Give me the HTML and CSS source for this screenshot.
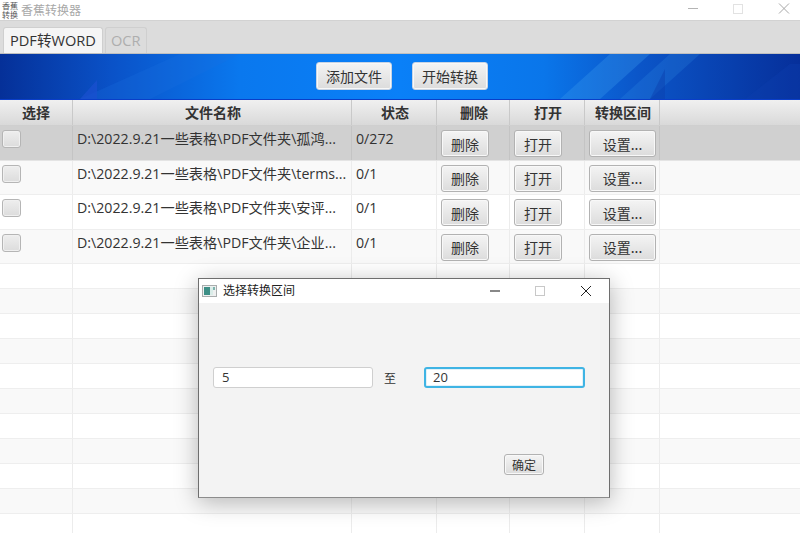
FILE: index.html
```html
<!DOCTYPE html>
<html lang="zh">
<head>
<meta charset="utf-8">
<title>香蕉转换器</title>
<link rel="stylesheet" href="styles.css">
</head>
<body>
<div class="app">
  <div class="titlebar">
    <div class="logo"><span>香蕉</span><span>转换</span></div>
    <div class="apptitle">香蕉转换器</div>
    <div class="winbtns">
      <svg class="wb" width="46" height="20" viewBox="0 0 46 20"><path d="M26 8.5h10" stroke="#b4b4b4" stroke-width="1"/></svg>
      <svg class="wb" width="46" height="20" viewBox="0 0 46 20"><rect x="25.5" y="4.5" width="9" height="9" fill="none" stroke="#e2e2e2"/></svg>
      <svg class="wb" width="46" height="20" viewBox="0 0 46 20"><path d="M25 3.5l10 10M35 3.5l-10 10" stroke="#a8a8a8" stroke-width="1" fill="none"/></svg>
    </div>
  </div>
  <div class="tabbar">
    <div class="tab active">PDF转WORD</div>
    <div class="tab disabled">OCR</div>
  </div>
  <div class="banner">
    <svg class="banner-art" width="800" height="45" viewBox="0 0 800 45" preserveAspectRatio="none">
      <path d="M80 45L180 0H240L150 45Z" fill="#1a6fe0" opacity=".25"/>
      <path d="M80 45L97 26V45Z" fill="#1b50d0" opacity=".7"/>
      <path d="M560 45L610 0H650L600 45Z" fill="#3fa0f0" opacity=".3"/>
      <path d="M620 45L670 0H700L650 45Z" fill="#3fa0f0" opacity=".18"/>
      <path d="M650 45L665 15V45Z" fill="#0a3fae" opacity=".45"/>
      <path d="M745 45L790 10L800 10V45Z" fill="#0f3fb0" opacity=".35"/>
    </svg>
    <button class="btn banner-btn">添加文件</button>
    <button class="btn banner-btn">开始转换</button>
  </div>
  <div class="table">
    <div class="row head">
      <div class="c c1">选择</div><div class="c c2">文件名称</div><div class="c c3">状态</div><div class="c c4">删除</div><div class="c c5">打开</div><div class="c c6">转换区间</div><div class="c c7"></div>
    </div>
    <div class="row data sel">
      <div class="c c1"><span class="check"></span></div><div class="c c2"><span class="txt">D:\2022.9.21一些表格\PDF文件夹\孤鸿...</span></div><div class="c c3"><span class="txt">0/272</span></div><div class="c c4"><button class="btn">删除</button></div><div class="c c5"><button class="btn">打开</button></div><div class="c c6"><button class="btn wide">设置...</button></div><div class="c c7"></div>
    </div>
    <div class="row data odd">
      <div class="c c1"><span class="check"></span></div><div class="c c2"><span class="txt">D:\2022.9.21一些表格\PDF文件夹\terms...</span></div><div class="c c3"><span class="txt">0/1</span></div><div class="c c4"><button class="btn">删除</button></div><div class="c c5"><button class="btn">打开</button></div><div class="c c6"><button class="btn wide">设置...</button></div><div class="c c7"></div>
    </div>
    <div class="row data">
      <div class="c c1"><span class="check"></span></div><div class="c c2"><span class="txt">D:\2022.9.21一些表格\PDF文件夹\安评...</span></div><div class="c c3"><span class="txt">0/1</span></div><div class="c c4"><button class="btn">删除</button></div><div class="c c5"><button class="btn">打开</button></div><div class="c c6"><button class="btn wide">设置...</button></div><div class="c c7"></div>
    </div>
    <div class="row data odd">
      <div class="c c1"><span class="check"></span></div><div class="c c2"><span class="txt">D:\2022.9.21一些表格\PDF文件夹\企业...</span></div><div class="c c3"><span class="txt">0/1</span></div><div class="c c4"><button class="btn">删除</button></div><div class="c c5"><button class="btn">打开</button></div><div class="c c6"><button class="btn wide">设置...</button></div><div class="c c7"></div>
    </div>
    <div class="row blank"><div class="c c1"></div><div class="c c2"></div><div class="c c3"></div><div class="c c4"></div><div class="c c5"></div><div class="c c6"></div><div class="c c7"></div></div>
    <div class="row blank odd"><div class="c c1"></div><div class="c c2"></div><div class="c c3"></div><div class="c c4"></div><div class="c c5"></div><div class="c c6"></div><div class="c c7"></div></div>
    <div class="row blank"><div class="c c1"></div><div class="c c2"></div><div class="c c3"></div><div class="c c4"></div><div class="c c5"></div><div class="c c6"></div><div class="c c7"></div></div>
    <div class="row blank odd"><div class="c c1"></div><div class="c c2"></div><div class="c c3"></div><div class="c c4"></div><div class="c c5"></div><div class="c c6"></div><div class="c c7"></div></div>
    <div class="row blank"><div class="c c1"></div><div class="c c2"></div><div class="c c3"></div><div class="c c4"></div><div class="c c5"></div><div class="c c6"></div><div class="c c7"></div></div>
    <div class="row blank odd"><div class="c c1"></div><div class="c c2"></div><div class="c c3"></div><div class="c c4"></div><div class="c c5"></div><div class="c c6"></div><div class="c c7"></div></div>
    <div class="row blank"><div class="c c1"></div><div class="c c2"></div><div class="c c3"></div><div class="c c4"></div><div class="c c5"></div><div class="c c6"></div><div class="c c7"></div></div>
    <div class="row blank odd"><div class="c c1"></div><div class="c c2"></div><div class="c c3"></div><div class="c c4"></div><div class="c c5"></div><div class="c c6"></div><div class="c c7"></div></div>
    <div class="row blank"><div class="c c1"></div><div class="c c2"></div><div class="c c3"></div><div class="c c4"></div><div class="c c5"></div><div class="c c6"></div><div class="c c7"></div></div>
    <div class="row blank odd"><div class="c c1"></div><div class="c c2"></div><div class="c c3"></div><div class="c c4"></div><div class="c c5"></div><div class="c c6"></div><div class="c c7"></div></div>
    <div class="row blank"><div class="c c1"></div><div class="c c2"></div><div class="c c3"></div><div class="c c4"></div><div class="c c5"></div><div class="c c6"></div><div class="c c7"></div></div>
  </div>
</div>
<div class="dialog">
  <div class="dlg-title">
    <svg class="dlg-icon" width="15" height="12" viewBox="0 0 15 12"><rect x=".5" y=".5" width="14" height="11" fill="#eef0f0" stroke="#a9adad"/><rect x="2" y="2" width="6" height="8" fill="#3d8f86"/><rect x="8" y="2" width="3" height="8" fill="#d9ece8"/><rect x="11" y="2" width="2" height="3" fill="#7fb4ae"/></svg>
    <span class="dlg-name">选择转换区间</span>
    <div class="dlg-btns">
      <svg width="46" height="24" viewBox="0 0 46 24"><path d="M20 12h10" stroke="#555" stroke-width="1.4"/></svg>
      <svg width="46" height="24" viewBox="0 0 46 24"><rect x="19.5" y="7.5" width="9" height="9" fill="none" stroke="#c8c8c8"/></svg>
      <svg width="46" height="24" viewBox="0 0 46 24"><path d="M19 7l10 10M29 7l-10 10" stroke="#222" stroke-width="1" fill="none"/></svg>
    </div>
  </div>
  <div class="dlg-body">
    <div class="range">
      <div class="input">5</div>
      <span class="to">至</span>
      <div class="input focus">20</div>
    </div>
    <div class="dlg-foot"><button class="btn ok">确定</button></div>
  </div>
</div>
</body>
</html>
```

FILE: styles.css
```css
* { box-sizing: border-box; }
html, body { margin: 0; padding: 0; height: 533px; overflow: hidden; }
body {
  font-family: "Noto Sans CJK SC", "Open Sans", sans-serif;
  background: #fff;
  color: #333;
  position: relative;
}
.app { width: 800px; height: 533px; display: flex; flex-direction: column; overflow: hidden; }

.titlebar { height: 21px; flex: none; display: flex; align-items: center; background: #fff; border-bottom: 1px solid #d2d2d2; }
.logo { width: 21px; flex: none; padding-left: 2px; display: flex; flex-direction: column; font-family: "Noto Sans CJK SC", serif; font-size: 8px; line-height: 9px; color: #555; white-space: nowrap; }
.apptitle { font-size: 12px; line-height: 20px; color: #a8a8a8; }
.winbtns { margin-left: auto; display: flex; align-items: center; }
.wb { display: block; }

.tabbar { height: 33px; flex: none; background: #dcdcdc; display: flex; align-items: flex-end; padding-left: 3px; gap: 2px; border-bottom: 1px solid #c0c0c0; }
.tab { height: 26px; font-family: "Open Sans", "Noto Sans CJK SC", sans-serif; font-size: 14.6px; line-height: 25px; border: 1px solid #cfcfcf; border-bottom: 0; border-radius: 3px 3px 0 0; white-space: nowrap; }
.tab.active { background: #f5f5f5; color: #333; width: 100px; padding: 0 6px; }
.tab.disabled { background: #dcdcdc; color: #aeaeae; width: 42px; padding: 0 5px; }

.banner {
  height: 46px; flex: none; position: relative; overflow: hidden;
  display: flex; align-items: center; justify-content: center; gap: 20px;
  padding-left: 4px; padding-bottom: 1px;
  background: linear-gradient(90deg, #053098 0%, #0a52c8 14%, #0a78ee 30%, #0a80f8 50%, #0a76ea 68%, #0b55c8 80%, #062f9a 100%);
  border-bottom: 1px solid #0a3ec8;
}
.banner-art { position: absolute; left: 0; top: 0; }
.btn {
  font-family: "Noto Sans CJK SC", sans-serif;
  font-size: 14px; line-height: 18px; color: #333; padding: 0;
  background: linear-gradient(#f4f4f4, #dcdcdc);
  border: 1px solid #b2b2b2; border-radius: 3px;
  box-shadow: inset 0 0 0 1px #f8f8f8;
  width: 48px; height: 27px; display: block;
}
.btn.wide { width: 67px; }
.banner-btn { width: 76px; height: 28px; position: relative; border-color: #c8d4e4; }

.table { flex: 1; background: #fff; }
.row { display: flex; }
.c { flex: none; border-right: 1px solid #ececec; }
.c1 { width: 73px; }
.c2 { width: 279px; }
.c3 { width: 85px; }
.c4 { width: 73px; }
.c5 { width: 75px; }
.c6 { width: 75px; }
.c7 { flex: 1; border-right: 0; }

.head { height: 26px; background: linear-gradient(#f0f0f0, #d9d9d9); border-bottom: 1px solid #cfcfcf; }
.head .c { font-size: 14px; font-weight: 700; line-height: 25px; text-align: center; color: #333; border-right: 1px solid #c9c9c9; padding-left: 2px; }
.head .c1 { padding-left: 0; }
.head .c7 { border-right: 0; }

.data { height: 34.5px; background: #fff; border-bottom: 1px solid #eeeeee; }
.data.odd, .blank.odd { background: #f9f9f9; }
.data.sel { background: #d0d0d0; border-bottom-color: #e4e4e4; }
.data.sel .c { border-right-color: #c4c4c4; }
.data .c { display: flex; align-items: flex-start; }
.data .c1 { padding: 4px 0 0 2px; }
.data .c2, .data .c3 { padding-left: 4px; }
.data .c4, .data .c5, .data .c6 { padding: 4px 0 0 4px; }
.txt { font-family: "Open Sans", "Noto Sans CJK SC", sans-serif; font-size: 14.2px; line-height: 19px; margin-top: 3px; color: #333; white-space: nowrap; }
.check { display: block; width: 19px; height: 18px; border: 1px solid #b5b5b5; border-radius: 3px; background: linear-gradient(#eeeeee, #dcdcdc); box-shadow: inset 0 0 0 1px #f0f0f0; }
.blank { height: 25px; border-bottom: 1px solid #eeeeee; }

.dialog {
  position: absolute; left: 198px; top: 278px; width: 412px; height: 220px;
  background: #f3f3f3; border: 1px solid #6e6e6e; border-bottom-color: #8c8c8c;
  box-shadow: 0 4px 22px rgba(0,0,0,.28);
  display: flex; flex-direction: column;
}
.dlg-title { height: 24px; flex: none; background: #fff; display: flex; align-items: center; padding-left: 3px; }
.dlg-icon { display: block; margin-right: 6px; }
.dlg-name { font-size: 12px; color: #222; line-height: 22px; height: 24px; }
.dlg-btns { margin-left: auto; display: flex; padding-right: 1px; }
.dlg-btns svg { display: block; }
.dlg-body { flex: 1; display: flex; flex-direction: column; padding: 64px 24px 22px 14px; }
.range { display: flex; align-items: center; }
.input { width: 160px; height: 21px; background: #fff; border: 1px solid #cfcfcf; border-radius: 3px; font-family: "Open Sans", sans-serif; font-size: 13px; line-height: 19px; padding-left: 8px; color: #333; }
.input.focus { width: 161px; border: 2px solid #3fb4e4; line-height: 17px; padding-left: 7px; box-shadow: 0 0 0 1px #e2f2f9 inset; }
.to { width: 51px; padding-left: 11px; font-size: 12px; color: #333; }
.dlg-foot { margin-top: auto; display: flex; justify-content: flex-end; padding-right: 41px; }
.btn.ok { width: 40px; height: 21px; font-size: 12px; line-height: 17px; }
```
